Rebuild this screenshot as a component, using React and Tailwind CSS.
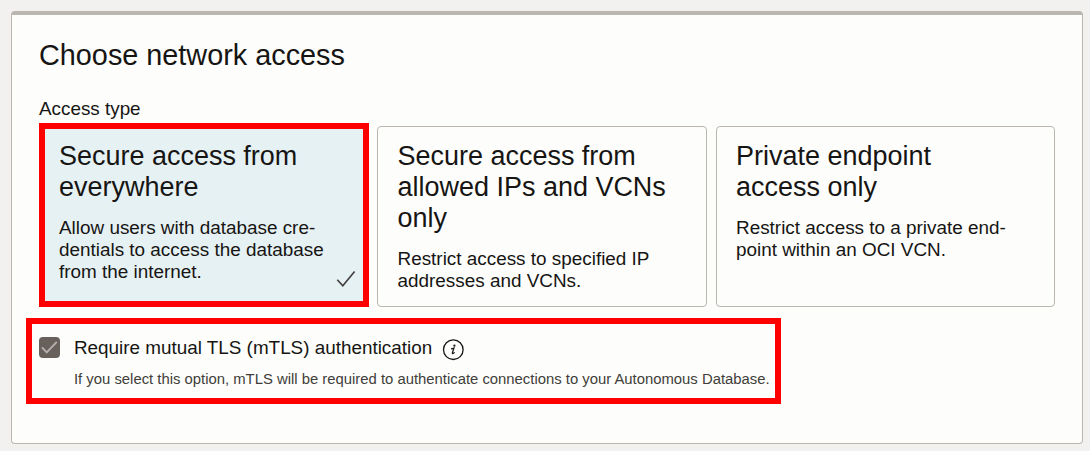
import React from "react";

function Card({ title, lines, className }) {
  return (
    <section className={`rounded-[4px] border border-[#bbb6b0] ${className}`}>
      <h2 className="text-[26.98px] leading-[31px] whitespace-nowrap">
        {title.map((t) => (
          <span key={t} className="block">{t}</span>
        ))}
      </h2>
      <p className="mt-[14px] text-[18.9px] leading-[22px] whitespace-nowrap">
        {lines.map((t) => (
          <span key={t} className="block">{t}</span>
        ))}
      </p>
    </section>
  );
}

export default function App() {
  return (
    <div className="flex h-[451px] w-[1090px] bg-[#f2f1f0] pt-[11px] pl-[11px] font-['Liberation_Sans',Arial,sans-serif] text-[#161513]">
      <main className="h-[433px] w-[1072px] rounded-[4px] border border-t-4 border-[#bbb6b0] bg-[#fdfdfb] pl-[27px]">
        <h1 className="mt-[23px] text-[28.82px] leading-[34px]">Choose network access</h1>
        <p className="mt-[26px] text-[18.85px] leading-[22px]">Access type</p>

        <div className="mt-[3px] flex items-end">
          <section className="flex h-[184px] w-[330px] items-end justify-between border-[6px] border-[#ff0000] bg-[#e6f1f4]">
            <div className="h-full pt-[12px] pl-[14px]">
              <h2 className="text-[26.98px] leading-[31px] whitespace-nowrap">
                Secure access from<br />everywhere
              </h2>
              <p className="mt-[14px] text-[18.9px] leading-[22px] whitespace-nowrap">
                Allow users with database cre-<br />dentials to access the database<br />from the internet.
              </p>
            </div>
            <svg className="-ml-4 mr-[7px] mb-[12px] h-[20px] w-[20px] shrink-0" viewBox="0 0 20 20" fill="none">
              <path d="M1.3 10.7 6.8 16.8 18.6 2.6" stroke="#3f3e3c" strokeWidth="1.6" />
            </svg>
          </section>
          <Card
            className="ml-[8px] h-[181px] w-[330px] pt-[14px] pl-[19.5px]"
            title={["Secure access from", "allowed IPs and VCNs", "only"]}
            lines={["Restrict access to specified IP", "addresses and VCNs."]}
          />
          <Card
            className="ml-[9px] h-[181px] w-[339px] pt-[14px] pl-[19px]"
            title={["Private endpoint", "access only"]}
            lines={["Restrict access to a private end-", "point within an OCI VCN."]}
          />
        </div>

        <div className="mt-[11px] -ml-[13px] h-[86px] w-[755px] border-[6px] border-[#ff0000] pl-[7px]">
          <div className="flex h-[46px] items-start">
            <span className="mt-[13px] flex h-[21px] w-[21px] shrink-0 rounded-[4px] bg-[#67605b]">
              <svg className="h-[21px] w-[21px]" viewBox="0 0 21 21" fill="none">
                <path d="M3 10.4 7.7 15.4 17.8 4.8" stroke="#b5b1ad" strokeWidth="1.9" />
              </svg>
            </span>
            <span className="mt-[13px] ml-[14px] text-[18.87px] leading-[22px] whitespace-nowrap">
              Require mutual TLS (mTLS) authentication
            </span>
            <svg className="mt-[15px] ml-[10px] h-[22px] w-[22px] shrink-0" viewBox="0 0 22 22" fill="none">
              <circle cx="11.3" cy="10.7" r="9.8" stroke="#161513" strokeWidth="1.3" />
              <circle cx="12.4" cy="6.7" r="1.1" fill="#161513" />
              <path d="M9 9.8c1.1 0 1.9-.3 2.9-.7L10.4 13.9c-.2.9.6 1 2.2-.5" stroke="#161513" strokeWidth="1.3" />
            </svg>
          </div>
          <p className="ml-[35px] text-[14.85px] leading-[18px] whitespace-nowrap text-[#403d3a]">
            If you select this option, mTLS will be required to authenticate connections to your Autonomous Database.
          </p>
        </div>
      </main>
    </div>
  );
}
